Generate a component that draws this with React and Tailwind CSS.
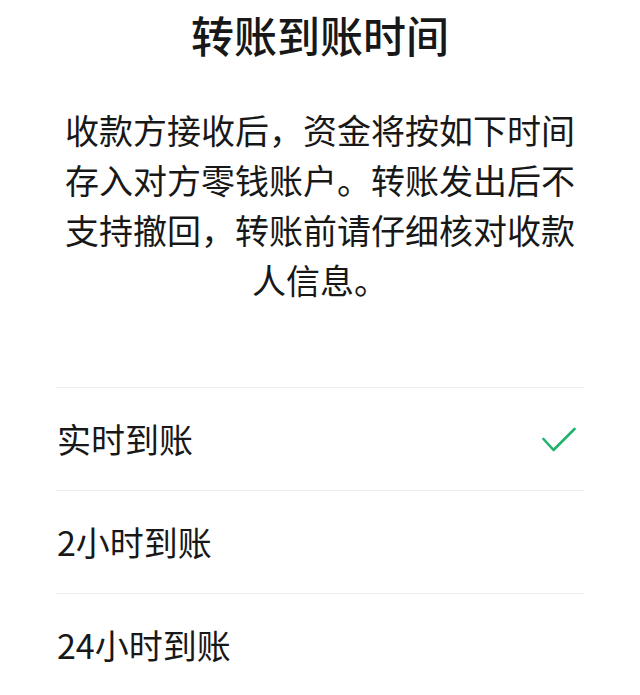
export default function App() {
  const rows = [
    { label: "实时到账", checked: true },
    { label: "2小时到账", checked: false },
    { label: "24小时到账", checked: false },
  ];
  return (
    <div
      className="w-[640px] h-[695px] bg-white overflow-hidden text-[#181818]"
      style={{ fontFamily: '"Noto Sans CJK SC", "Noto Sans", sans-serif' }}
    >
      <h1 className="pt-[4px] text-center text-[43px] leading-[60px] font-medium">
        转账到账时间
      </h1>
      <p className="mt-[41px] mx-auto w-[520px] text-center text-[34px] leading-[50px]">
        收款方接收后，资金将按如下时间存入对方零钱账户。转账发出后不支持撤回，转账前请仔细核对收款人信息。
      </p>
      <div className="mt-[82px] mx-[56px] border-b border-[#ededed]">
        {rows.map((r) => (
          <div
            key={r.label}
            className="h-[103px] border-t border-[#ededed] flex items-center justify-between"
          >
            <span className="text-[34px] leading-none pl-[1px]">{r.label}</span>
            {r.checked && (
              <svg
                width="34"
                height="25"
                viewBox="0 0 34 25"
                className="mr-[8px]"
                fill="none"
              >
                <path
                  d="M1.5 12 L11.5 23 L32.5 2"
                  stroke="#23b26b"
                  strokeWidth="2.6"
                  strokeLinecap="round"
                  strokeLinejoin="round"
                />
              </svg>
            )}
          </div>
        ))}
      </div>
    </div>
  );
}
